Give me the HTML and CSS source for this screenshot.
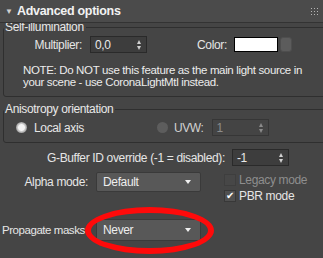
FILE: index.html
```html
<!DOCTYPE html>
<html>
<head>
<meta charset="utf-8">
<link rel="stylesheet" href="styles.css">
</head>
<body>
<div class="panel">
  <div class="rollout-header">
    <span class="caret">&#9660;</span>
    <span class="title">Advanced options</span>
    <span class="grip"><i></i><i></i><i></i><i></i><i></i><i></i><i></i><i></i><i></i></span>
  </div>

  <fieldset class="group group-self">
    <legend>Self-illumination</legend>
    <div class="row row-mult">
      <span class="lbl lbl-mult">Multiplier:</span>
      <span class="spinner sp-mult"><span class="val">0,0</span><span class="arrows"></span></span>
      <span class="lbl lbl-color">Color:</span>
      <span class="swatch"></span>
      <span class="swatch-btn"></span>
    </div>
    <p class="note">NOTE: Do NOT use this feature as the main light source in your scene - use CoronaLightMtl instead.</p>
  </fieldset>

  <fieldset class="group group-aniso">
    <legend>Anisotropy orientation</legend>
    <div class="row row-aniso">
      <span class="radio checked"></span>
      <span class="lbl radio-lbl">Local axis</span>
      <span class="radio disabled"></span>
      <span class="lbl uvw-lbl">UVW:</span>
      <span class="spinner sp-uvw disabled"><span class="val">1</span><span class="arrows"></span></span>
    </div>
  </fieldset>

  <div class="row row-gbuf">
    <span class="lbl">G-Buffer ID override (-1 = disabled):</span>
    <span class="spinner sp-gbuf"><span class="val">-1</span><span class="arrows"></span></span>
  </div>

  <div class="row row-alpha">
    <span class="lbl lbl-col">Alpha mode:</span>
    <span class="dropdown"><span class="val">Default</span><span class="dd-arrow"></span></span>
    <div class="checks">
      <div class="check-row disabled"><span class="checkbox"></span><span class="lbl">Legacy mode</span></div>
      <div class="check-row"><span class="checkbox on">&#10004;</span><span class="lbl">PBR mode</span></div>
    </div>
  </div>

  <div class="row row-prop">
    <span class="lbl lbl-col lbl-left">Propagate masks</span>
    <span class="dropdown dd-prop"><span class="val">Never</span><span class="dd-arrow"></span></span>
    <span class="highlight"></span>
  </div>
</div>
</body>
</html>
```

FILE: styles.css
```css
html, body {
  margin: 0;
  padding: 0;
  background: #454545;
}
body {
  width: 323px;
  height: 258px;
  overflow: hidden;
  font-family: "Liberation Sans", Arial, sans-serif;
  font-size: 12px;
  letter-spacing: -0.35px;
  color: #e6e6e6;
}
.panel {
  position: relative;
  width: 323px;
  height: 258px;
}
.rollout-header {
  height: 22px;
  border-bottom: 1px solid #333333;
  background: #4b4b4b;
  display: flex;
  align-items: center;
  position: relative;
}
.caret {
  font-size: 8px;
  color: #cfcfcf;
  margin-left: 5px;
  width: 12px;
  letter-spacing: 0;
}
.title {
  font-weight: bold;
  font-size: 12.5px;
  letter-spacing: -0.3px;
  color: #f2f2f2;
}
.grip {
  position: absolute;
  right: 5px;
  top: 8px;
  width: 7px;
  height: 7px;
  display: grid;
  grid-template-columns: repeat(3, 1px);
  grid-template-rows: repeat(3, 1px);
  gap: 2px;
}
.grip i {
  display: block;
  width: 1px;
  height: 1px;
  background: #b5b5b5;
}
.group {
  margin: 0 0 0 3px;
  padding: 0;
  border: 1px solid #2f2f2f;
  border-radius: 3px;
  width: 330px;
  box-sizing: border-box;
  min-width: 0;
}
.group legend {
  padding: 0 2px 0 1px;
  margin-left: 0;
  line-height: 14px;
  color: #e8e8e8;
}
.group-self {
  margin-top: -3px;
  padding-bottom: 8px;
}
.group-aniso {
  margin-top: 5px;
  padding-bottom: 6px;
}
.row {
  display: flex;
  align-items: center;
}
.lbl {
  white-space: nowrap;
}
.row-mult {
  margin-top: 2px;
  height: 17px;
}
.lbl-mult {
  width: 78px;
  text-align: right;
}
.spinner {
  box-sizing: border-box;
  height: 17px;
  background: #3d3d3d;
  border: 1px solid #2a2a2a;
  display: flex;
  align-items: center;
  justify-content: space-between;
  padding: 0 4px 0 4px;
  color: #eaeaea;
}
.spinner .arrows {
  width: 5px;
  height: 10px;
  position: relative;
}
.spinner .arrows::before,
.spinner .arrows::after {
  content: "";
  position: absolute;
  left: 0;
  border-left: 2.5px solid transparent;
  border-right: 2.5px solid transparent;
}
.spinner .arrows::before {
  top: 0;
  border-bottom: 4px solid #d0d0d0;
}
.spinner .arrows::after {
  bottom: 0;
  border-top: 4px solid #d0d0d0;
}
.spinner.disabled {
  color: #8c8c8c;
  background: #444444;
  border-color: #363636;
}
.spinner.disabled .arrows::before { border-bottom-color: #8a8a8a; }
.spinner.disabled .arrows::after { border-top-color: #8a8a8a; }
.sp-mult {
  margin-left: 8px;
  width: 57px;
}
.lbl-color {
  margin-left: 50px;
  width: 28px;
}
.swatch {
  margin-left: 9px;
  width: 44px;
  height: 15px;
  box-sizing: border-box;
  background: #ffffff;
  border: 1px solid #000000;
}
.swatch-btn {
  margin-left: 2px;
  width: 12px;
  height: 15px;
  border-radius: 3px;
  background: #5c5c5c;
  border: 1px solid #4e4e4e;
  box-sizing: border-box;
}
.note {
  margin: 11px 0 0 19px;
  width: 290px;
  font-size: 11.5px;
  line-height: 12px;
  letter-spacing: -0.35px;
  color: #ececec;
}
.row-aniso {
  margin-top: 3px;
  height: 17px;
}
.radio {
  width: 11px;
  height: 11px;
  border-radius: 50%;
  box-sizing: border-box;
  flex: none;
}
.radio.checked {
  margin-left: 12px;
  background: radial-gradient(circle, #f4f4f4 0 3px, #d9d9d9 3.5px, #9a9a9a 5.5px);
}
.radio.disabled {
  margin-left: 73px;
  background: #5d5d5d;
}
.radio-lbl {
  margin-left: 7px;
}
.uvw-lbl {
  margin-left: 6px;
  color: #d2d2d2;
}
.sp-uvw {
  margin-left: 8px;
  width: 57px;
}
.row-gbuf {
  margin-top: 6px;
  height: 17px;
  padding-left: 47px;
}
.sp-gbuf {
  margin-left: 7px;
  width: 57px;
}
.row-alpha {
  margin-top: 6px;
  align-items: flex-start;
}
.lbl-col {
  width: 88px;
  text-align: right;
  line-height: 20px;
}
.lbl-left {
  text-align: left;
  padding-left: 2px;
  width: 86px;
  font-size: 11.5px;
  letter-spacing: -0.45px;
}
.dropdown {
  margin-left: 8px;
  width: 105px;
  height: 20px;
  box-sizing: border-box;
  background: #585858;
  border: 1px solid #3a3a3a;
  border-radius: 2px;
  display: flex;
  align-items: center;
  justify-content: space-between;
  padding: 0 9px 0 6px;
  color: #eeeeee;
  flex: none;
}
.dd-arrow {
  width: 0;
  height: 0;
  border-left: 3.5px solid transparent;
  border-right: 3.5px solid transparent;
  border-top: 4px solid #f0f0f0;
}
.checks {
  margin-left: 23px;
  margin-top: 2px;
  display: flex;
  flex-direction: column;
  gap: 4px;
}
.check-row {
  display: flex;
  align-items: center;
  height: 12px;
}
.checkbox {
  width: 12px;
  height: 12px;
  box-sizing: border-box;
  border: 1px solid #3b3b3b;
  background: #4a4a4a;
  margin-right: 3px;
  font-size: 10px;
  line-height: 10px;
  text-align: center;
  color: #ffffff;
  letter-spacing: 0;
}
.checkbox.on {
  background: #505050;
  border-color: #383838;
}
.check-row.disabled .lbl {
  color: #8e8e8e;
}
.check-row.disabled .checkbox {
  border-color: #3e3e3e;
  background: #474747;
}
.row-prop {
  margin-top: 17px;
  position: relative;
  align-items: center;
}
.dd-prop {
  height: 22px;
}
.highlight {
  position: absolute;
  left: 85px;
  top: -12px;
  width: 129px;
  height: 47px;
  box-sizing: border-box;
  border: 6px solid #ff0a0a;
  border-radius: 50%;
  filter: blur(0.7px);
}
```
